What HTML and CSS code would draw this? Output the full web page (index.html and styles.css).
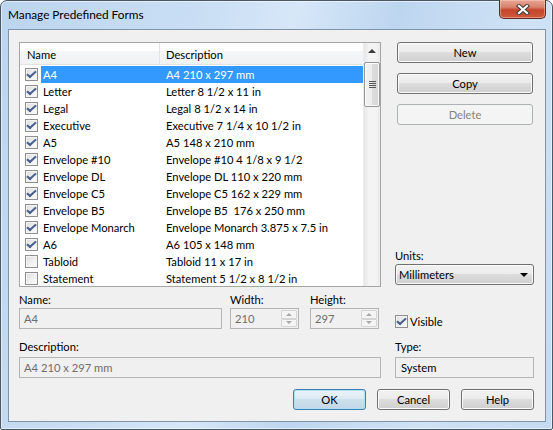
FILE: index.html
```html
<!DOCTYPE html>
<html>
<head>
<meta charset="utf-8">
<link rel="stylesheet" href="styles.css">
</head>
<body>
<div class="window">
  <div class="titlebar">
    <span class="title">Manage Predefined Forms</span>
    <div class="close">
      <svg width="14" height="11" viewBox="0 0 14 11">
        <path d="M3 2 L11 9 M11 2 L3 9" stroke="#3b3b3b" stroke-width="4.2" stroke-linecap="square" fill="none"/>
        <path d="M3 2 L11 9 M11 2 L3 9" stroke="#ffffff" stroke-width="2.2" stroke-linecap="square" fill="none"/>
      </svg>
    </div>
  </div>
  <div class="client">
    <div class="main">
      <div class="list">
        <div class="list-body">
          <div class="header">
            <div class="hcol hname">Name</div>
            <div class="hcol hdesc">Description</div>
          </div>
          <div class="rows">
            <div class="row sel"><span class="cb on"></span><span class="cells"><span class="cname">A4</span><span class="cdesc">A4 210 x 297 mm</span></span></div>
            <div class="row"><span class="cb on"></span><span class="cells"><span class="cname">Letter</span><span class="cdesc">Letter 8 1/2 x 11 in</span></span></div>
            <div class="row"><span class="cb on"></span><span class="cells"><span class="cname">Legal</span><span class="cdesc">Legal 8 1/2 x 14 in</span></span></div>
            <div class="row"><span class="cb on"></span><span class="cells"><span class="cname">Executive</span><span class="cdesc">Executive 7 1/4 x 10 1/2 in</span></span></div>
            <div class="row"><span class="cb on"></span><span class="cells"><span class="cname">A5</span><span class="cdesc">A5 148 x 210 mm</span></span></div>
            <div class="row"><span class="cb on"></span><span class="cells"><span class="cname">Envelope #10</span><span class="cdesc">Envelope #10 4 1/8 x 9 1/2</span></span></div>
            <div class="row"><span class="cb on"></span><span class="cells"><span class="cname">Envelope DL</span><span class="cdesc">Envelope DL 110 x 220 mm</span></span></div>
            <div class="row"><span class="cb on"></span><span class="cells"><span class="cname">Envelope C5</span><span class="cdesc">Envelope C5 162 x 229 mm</span></span></div>
            <div class="row"><span class="cb on"></span><span class="cells"><span class="cname">Envelope B5</span><span class="cdesc">Envelope B5&nbsp; 176 x 250 mm</span></span></div>
            <div class="row"><span class="cb on"></span><span class="cells"><span class="cname">Envelope Monarch</span><span class="cdesc">Envelope Monarch 3.875 x 7.5 in</span></span></div>
            <div class="row"><span class="cb on"></span><span class="cells"><span class="cname">A6</span><span class="cdesc">A6 105 x 148 mm</span></span></div>
            <div class="row"><span class="cb"></span><span class="cells"><span class="cname">Tabloid</span><span class="cdesc">Tabloid 11 x 17 in</span></span></div>
            <div class="row"><span class="cb"></span><span class="cells"><span class="cname">Statement</span><span class="cdesc">Statement 5 1/2 x 8 1/2 in</span></span></div>
          </div>
        </div>
        <div class="vscroll">
          <div class="sb-up"><span class="up-arrow"></span></div>
          <div class="thumb"><span class="grip"></span></div>
        </div>
      </div>

      <div class="side">
        <div class="btn">New</div>
        <div class="btn">Copy</div>
        <div class="btn disabled">Delete</div>
        <div class="units">
          <div class="label">Units:</div>
          <div class="combo"><span>Millimeters</span><span class="arrow"></span></div>
        </div>
      </div>

      <div class="fields">
        <div class="field fname">
          <div class="label">Name:</div>
          <div class="input dis">A4</div>
        </div>
        <div class="field fnum">
          <div class="label">Width:</div>
          <div class="input dis spin">210<span class="spinbtns"><span class="sbtn"><span class="tri up"></span></span><span class="sbtn"><span class="tri down"></span></span></span></div>
        </div>
        <div class="field fnum fh">
          <div class="label">Height:</div>
          <div class="input dis spin">297<span class="spinbtns"><span class="sbtn"><span class="tri up"></span></span><span class="sbtn"><span class="tri down"></span></span></span></div>
        </div>
      </div>

      <div class="visible"><span class="cb on"></span><span class="vlabel">Visible</span></div>

      <div class="field desc">
        <div class="label">Description:</div>
        <div class="input dis">A4 210 x 297 mm</div>
      </div>

      <div class="field type">
        <div class="label">Type:</div>
        <div class="input ro">System</div>
      </div>

      <div class="actions">
        <div class="btn default">OK</div>
        <div class="btn">Cancel</div>
        <div class="btn">Help</div>
      </div>
    </div>
  </div>
</div>
</body>
</html>
```

FILE: styles.css
```css
* { box-sizing: border-box; }
html, body { margin: 0; padding: 0; }
body {
  width: 553px;
  height: 430px;
  overflow: hidden;
  font-family: Lato, "Noto Sans", sans-serif;
  font-size: 11.2px;
  color: #000;
  background: #ffffff;
}
.window {
  width: 553px;
  height: 430px;
  border: 1px solid #4a5866;
  border-radius: 7px 7px 2px 2px;
  background: linear-gradient(105deg, #bcd5ee 0%, #c9def4 30%, #d6e7f8 45%, #bdd6ef 60%, #cfe2f6 80%, #c3daf1 100%);
  display: flex;
  flex-direction: column;
  box-shadow: inset 0 0 0 1px rgba(255,255,255,0.55);
}
.titlebar {
  height: 28px;
  display: flex;
  align-items: flex-start;
  padding-left: 7px;
}
.title {
  line-height: 16px;
  margin-top: 6px;
  font-size: 11.8px;
  color: #000;
}
.close {
  margin-left: auto;
  margin-right: 6px;
  width: 47px;
  height: 19px;
  margin-top: -1px;
  border: 1px solid #5e2a22;
  border-top: none;
  border-radius: 0 0 5px 5px;
  background: linear-gradient(#e8a595 0%, #d9826d 40%, #c5452b 55%, #cf5a3d 100%);
  box-shadow: inset 0 0 0 1px rgba(255,210,200,0.45);
  display: flex;
  align-items: center;
  justify-content: center;
}
.client {
  flex: 1;
  margin: 0 6px 7px 7px;
  border: 1px solid #8094a8;
  background: #f0f0f0;
  padding: 12px 11px 11px 10px;
}
.main {
  display: grid;
  grid-template-columns: 362px 139px;
  grid-template-rows: 245px 42px 49px 32px;
  column-gap: 14px;
}
.label {
  height: 15px;
  line-height: 15px;
  color: #000;
  white-space: nowrap;
}
/* list */
.list {
  border: 1px solid #a5a5a5;
  background: #fff;
  display: flex;
  overflow: hidden;
}
.list-body {
  flex: 1;
  overflow: hidden;
}
.header {
  height: 22px;
  display: flex;
  background: linear-gradient(#ffffff 0%, #ffffff 40%, #f4f5f7 40%, #f1f2f4 100%);
  border-bottom: 1px solid #e1e3e6;
}
.hcol {
  line-height: 19px;
  padding-top: 2px;
  white-space: nowrap;
}
.hname {
  width: 140px;
  padding-left: 7px;
  border-right: 1px solid #e1e3e6;
}
.hdesc {
  padding-left: 6px;
}
.rows {
  padding-top: 1px;
}
.row {
  height: 17px;
  display: flex;
  align-items: center;
  padding-left: 5px;
  white-space: nowrap;
}
.cells {
  display: flex;
  flex: 1;
  height: 17px;
  line-height: 17px;
  margin-left: 3px;
}
.row.sel .cells {
  background: #3399ff;
  color: #fff;
}
.cname {
  width: 125px;
  padding-left: 2px;
  overflow: hidden;
}
.cb {
  width: 13px;
  height: 13px;
  border: 1px solid #8e8f8f;
  background: linear-gradient(135deg, #dcdcdc 0%, #f2f2f2 60%, #fbfbfb 100%);
  box-shadow: inset 0 0 0 1px #f4f4f4;
  position: relative;
  flex: none;
}
.cb.on::after {
  content: "";
  position: absolute;
  left: 3px;
  top: 0px;
  width: 3px;
  height: 7px;
  border-right: 2px solid #4a5f8f;
  border-bottom: 2px solid #4a5f8f;
  transform: rotate(40deg) skewX(-8deg);
}
.vscroll {
  width: 17px;
  flex: none;
  background: linear-gradient(90deg, #e6e6e6, #f4f4f4 30%, #f4f4f4 70%, #ebebeb);
  border-left: 1px solid #ececec;
}
.sb-up {
  height: 17px;
  display: flex;
  align-items: center;
  justify-content: center;
}
.up-arrow {
  width: 0;
  height: 0;
  border-left: 4px solid transparent;
  border-right: 4px solid transparent;
  border-bottom: 4px solid #3c3c3c;
  margin-top: -1px;
}
.thumb {
  margin-top: 2px;
  width: 16px;
  height: 45px;
  border: 1px solid #979797;
  border-radius: 2px;
  background: linear-gradient(90deg, #f3f3f3 0%, #ececec 50%, #dcdcdc 51%, #d8d8d8 100%);
  box-shadow: inset 0 0 0 1px #fafafa;
  display: flex;
  align-items: center;
  justify-content: center;
}
.grip {
  width: 7px;
  height: 7px;
  background: repeating-linear-gradient(#565656 0px, #565656 1px, transparent 1px, transparent 2px);
}
/* side */
.side {
  display: flex;
  flex-direction: column;
}
.btn {
  height: 21px;
  border: 1px solid #707070;
  border-radius: 3px;
  background: linear-gradient(#f2f2f2 0%, #ebebeb 50%, #dddddd 50%, #cfcfcf 100%);
  box-shadow: inset 0 0 0 1px #fbfbfb;
  text-align: center;
  line-height: 19px;
  color: #000;
}
.side .btn {
  margin: 0 1px 10px 2px;
}
.btn.disabled {
  border-color: #adb2b5;
  background: #f4f4f4;
  color: #838383;
  box-shadow: none;
}
.btn.default {
  border-color: #3c7fb1;
  background: linear-gradient(#eaf3fa 0%, #dde9f3 50%, #cddfec 50%, #c3d8e8 100%);
  box-shadow: inset 0 0 0 1px #aee0f8;
}
.units {
  margin-top: auto;
  margin-bottom: 2px;
}
.units .label {
  margin-bottom: 1px;
}
.combo {
  height: 21px;
  border: 1px solid #707070;
  border-radius: 3px;
  background: linear-gradient(#f2f2f2 0%, #ebebeb 50%, #dddddd 50%, #cfcfcf 100%);
  box-shadow: inset 0 0 0 1px #fbfbfb;
  display: flex;
  align-items: center;
  padding-left: 3px;
  padding-right: 5px;
  line-height: 19px;
}
.combo .arrow {
  margin-left: auto;
  width: 0;
  height: 0;
  border-left: 4px solid transparent;
  border-right: 4px solid transparent;
  border-top: 4px solid #000;
}
/* fields */
.fields {
  display: flex;
  gap: 8px;
}
.field .label {
  margin-top: 5px;
  margin-bottom: 1px;
}
.fname { width: 203px; }
.fnum { width: 69px; }
.fh { margin-left: 3px; }
.input {
  height: 21px;
  border: 1px solid #afafaf;
  line-height: 19px;
  padding-left: 4px;
  white-space: nowrap;
  position: relative;
}
.input.dis {
  color: #6d6d6d;
  background: #f0f0f0;
  border-color: #b5b5b5;
}
.input.ro {
  background: #f0f0f0;
  border-color: #b5b5b5;
  color: #000;
}
.spinbtns {
  position: absolute;
  right: 1px;
  top: 1px;
  width: 16px;
  height: 17px;
  display: flex;
  flex-direction: column;
}
.sbtn {
  flex: 1;
  border: 1px solid #d4d4d4;
  background: #f4f4f4;
  display: flex;
  align-items: center;
  justify-content: center;
  border-radius: 1px;
}
.tri {
  width: 0;
  height: 0;
  border-left: 3px solid transparent;
  border-right: 3px solid transparent;
}
.tri.up { border-bottom: 3px solid #a8a8a8; }
.tri.down { border-top: 3px solid #a8a8a8; }
.visible {
  display: flex;
  align-items: center;
  padding-top: 27px;
  height: 42px;
}
.vlabel {
  margin-left: 2px;
  line-height: 13px;
}
.desc .label, .type .label {
  margin-top: 10px;
  margin-bottom: 3px;
}
.type .input {
  padding-left: 5px;
}
.actions {
  grid-column: 1 / 3;
  display: flex;
  justify-content: flex-end;
  gap: 11px;
  padding-top: 11px;
}
.actions .btn {
  width: 73px;
}
```
